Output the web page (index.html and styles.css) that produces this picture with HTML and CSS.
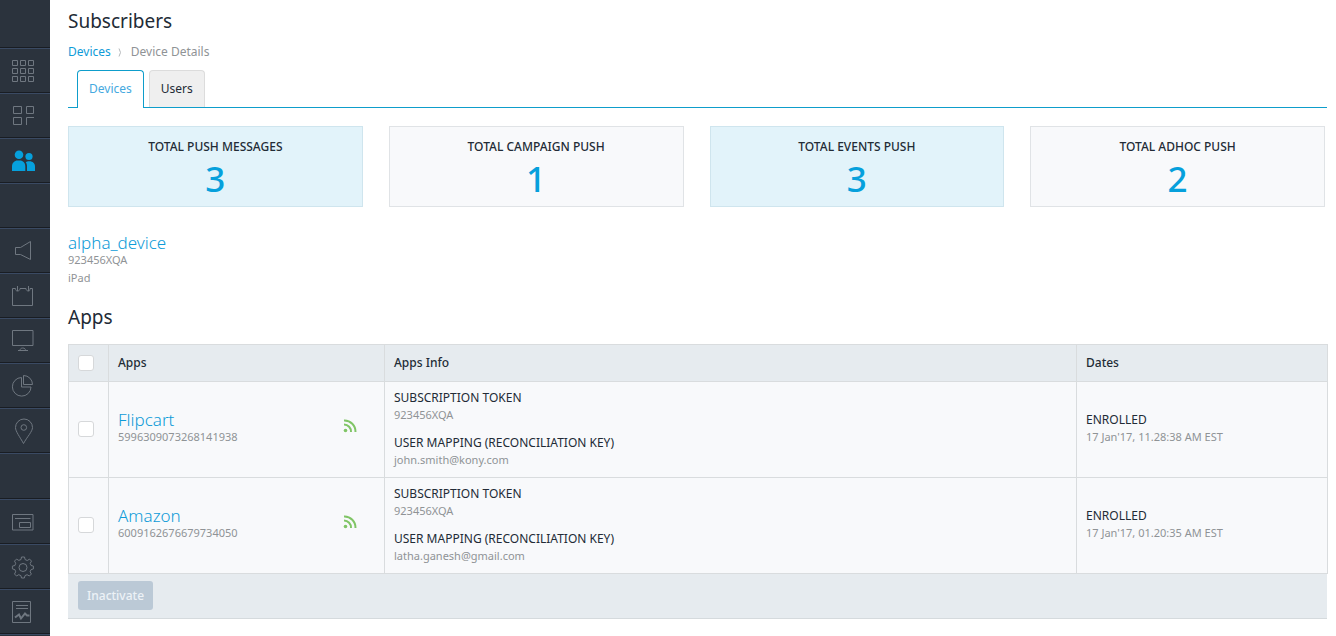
FILE: index.html
```html
<!DOCTYPE html>
<html lang="en">
<head>
<meta charset="utf-8">
<title>Subscribers</title>
<link rel="stylesheet" href="styles.css">
</head>
<body>
<div class="app">
  <nav class="sidebar" aria-label="Main">
    <div class="side-top"></div>
    <a class="side-item" href="#" aria-label="Dashboard"><svg width="24" height="24" viewBox="0 0 24 24"><path d="M1.500 1.500h5v5h-5zM9.500 1.500h5v5h-5zM17.500 1.500h5v5h-5zM1.500 9.500h5v5h-5zM9.500 9.500h5v5h-5zM17.500 9.500h5v5h-5zM1.500 17.500h5v5h-5zM9.500 17.500h5v5h-5zM17.500 17.500h5v5h-5z"/></svg></a>
    <a class="side-item" href="#" aria-label="Apps"><svg width="24" height="24" viewBox="0 0 24 24"><path d="M2.500 2.500h8v7h-8zM15.500 2.500h7v7h-7zM2.500 13.500h8v7h-8zM15.500 21v-7.500h7.500"/></svg></a>
    <a class="side-item active" href="#" aria-label="Subscribers"><svg width="24" height="24" viewBox="0 0 24 24"><circle cx="8" cy="5.700" r="4.300"/><circle cx="18" cy="7.500" r="3.600"/><path d="M1 22v-4.500c0-3.500 2.500-6 5.500-6h2.300c3.300 0 5.500 2.500 5.500 6v4.500zM16 22v-5c0-1.600-.5-2.800-1.200-3.800.8-.6 1.600-.9 2.600-.9h1.200c3 0 5.400 2.200 5.400 5.200v4.500z"/></svg></a>
    <div class="side-item"></div>
    <a class="side-item" href="#" aria-label="Campaigns"><svg width="24" height="24" viewBox="0 0 24 24"><path d="M4.500 8.500h5L19.500 2.500v18L9.500 15.500h-5z"/></svg></a>
    <a class="side-item" href="#" aria-label="Events"><svg width="24" height="24" viewBox="0 0 24 24"><path d="M6.500 2v5M17.500 2v5M4.500 4.500h-3v17h20v-17h-2.500M4.500 4.500c0 1.800.8 2.500 2 2.500s2.500-.7 2.500-2.500h6c0 1.800 1.300 2.500 2.500 2.500s1.500-.7 1.500-2.500"/></svg></a>
    <a class="side-item" href="#" aria-label="Messages"><svg width="24" height="24" viewBox="0 0 24 24"><path d="M1.500 1.500h20.500v15h-20.500zM7 21.500h10M9 21.500c0-1.500 1-2.500 2.800-2.500s2.700 1 2.700 2.500"/></svg></a>
    <a class="side-item" href="#" aria-label="Reports"><svg width="24" height="24" viewBox="0 0 24 24"><path d="M10.500 3.500a9.300 9.300 0 1 0 9.500 9.500h-9.500zM12.500 1.500v9h9a9 9 0 0 0-9-9z"/></svg></a>
    <a class="side-item" href="#" aria-label="Locations"><svg width="24" height="26" viewBox="0 0 24 26"><path d="M12.500 25.500C9 19 4.500 13.500 4.500 9.500a8 8 0 0 1 17 0c0 4-5.500 9.500-9 16z" /><circle cx="12.800" cy="9.500" r="2.800"/></svg></a>
    <div class="side-item spacer"></div>
    <a class="side-item" href="#" aria-label="Segments"><svg width="24" height="24" viewBox="0 0 24 24"><path d="M1.500 4.500h20.500v15.500h-20.500zM4 8.500h15.500M8.500 12.500h11v5h-11z"/></svg></a>
    <a class="side-item" href="#" aria-label="Settings"><svg width="24" height="24" viewBox="0 0 24 24"><path d="M10.500 2h3l.6 2.600 2.200.9 2.300-1.400 1.900 2-1.300 2.300.8 2.100 2.400.6v2.800l-2.400.7-.9 2.200 1.300 2.200-2 2-2.300-1.300-2.100.9-.6 2.400h-2.900l-.6-2.400-2.200-.9-2.200 1.300-2-2 1.200-2.200-.8-2.200-2.500-.7v-2.800l2.500-.6.8-2.200-1.200-2.200 2-2 2.300 1.300 2.200-.9z"/><circle cx="12" cy="12.500" r="4"/></svg></a>
    <a class="side-item" href="#" aria-label="Logs"><svg width="24" height="24" viewBox="0 0 24 24"><path d="M1.500 1.500h18v21h-18zM5 5.500h12M5 8.500h12"/><path class="trend" d="M4 17.500L8 14.500l2 4 4-5 2 2h2.500"/></svg></a>
    <div class="side-item"></div>
  </nav>

  <main class="content">
    <h1 class="heading">Subscribers</h1>
    <nav class="crumbs" aria-label="Breadcrumb">
      <a href="#">Devices</a>
      <svg width="5" height="9" viewBox="0 0 5 9" aria-hidden="true"><path d="M1 .5q3 4 0 8"/></svg>
      <span>Device Details</span>
    </nav>
    <div class="tabs" role="tablist">
      <button class="tab selected" role="tab" aria-selected="true">Devices</button>
      <button class="tab" role="tab" aria-selected="false">Users</button>
    </div>

    <section class="stats">
      <div class="stat tinted"><h2>TOTAL PUSH MESSAGES</h2><p>3</p></div>
      <div class="stat"><h2>TOTAL CAMPAIGN PUSH</h2><p>1</p></div>
      <div class="stat tinted"><h2>TOTAL EVENTS PUSH</h2><p>3</p></div>
      <div class="stat"><h2>TOTAL ADHOC PUSH</h2><p>2</p></div>
    </section>

    <section class="device">
      <a class="name" href="#">alpha_device</a>
      <p class="meta">923456XQA</p>
      <p class="meta">iPad</p>
    </section>

    <h2 class="heading">Apps</h2>
    <table class="apps">
      <colgroup><col class="col-check"><col class="col-app"><col><col class="col-date"></colgroup>
      <thead>
        <tr><th><input type="checkbox" aria-label="Select all apps"></th><th>Apps</th><th>Apps Info</th><th>Dates</th></tr>
      </thead>
      <tbody>
        <tr>
          <td class="pick"><input type="checkbox" aria-label="Select Flipcart"></td>
          <td><div class="app-cell"><div><a class="name" href="#">Flipcart</a><p class="meta">5996309073268141938</p></div>
            <svg class="feed" width="14" height="14" viewBox="0 0 14 14" aria-hidden="true"><circle cx="2.500" cy="11.500" r="1.800"/><path d="M1 5.500a7 7 0 0 1 7 7.500M1 1.500a11 11 0 0 1 11.500 11.500"/></svg></div></td>
          <td class="info"><p class="label">SUBSCRIPTION TOKEN</p><p class="meta spaced">923456XQA</p><p class="label">USER MAPPING (RECONCILIATION KEY)</p><p class="meta">john.smith@kony.com</p></td>
          <td><p class="label">ENROLLED</p><p class="meta">17 Jan'17, 11.28:38 AM EST</p></td>
        </tr>
        <tr>
          <td class="pick"><input type="checkbox" aria-label="Select Amazon"></td>
          <td><div class="app-cell"><div><a class="name" href="#">Amazon</a><p class="meta">6009162676679734050</p></div>
            <svg class="feed" width="14" height="14" viewBox="0 0 14 14" aria-hidden="true"><circle cx="2.500" cy="11.500" r="1.800"/><path d="M1 5.500a7 7 0 0 1 7 7.500M1 1.500a11 11 0 0 1 11.500 11.500"/></svg></div></td>
          <td class="info"><p class="label">SUBSCRIPTION TOKEN</p><p class="meta spaced">923456XQA</p><p class="label">USER MAPPING (RECONCILIATION KEY)</p><p class="meta">latha.ganesh@gmail.com</p></td>
          <td><p class="label">ENROLLED</p><p class="meta">17 Jan'17, 01.20:35 AM EST</p></td>
        </tr>
      </tbody>
    </table>
    <div class="table-footer"><button class="inactivate" disabled>Inactivate</button></div>
  </main>
</div>
</body>
</html>
```
FILE: styles.css
```css
* { box-sizing: border-box; }
body {
  margin: 0;
  background: #fff;
  color: #222b36;
  font-family: "Noto Sans", "Open Sans", sans-serif;
  font-size: 12px;
  line-height: 18px;
}
h1, h2, p { margin: 0; }
a { color: #0e9bd8; text-decoration: none; }
button { font: inherit; }

.app { display: flex; height: 100vh; }
.sidebar { flex: none; width: 50px; overflow: hidden; background: #2b333d; }
.side-top { height: 47px; }
.side-item {
  display: flex;
  align-items: center;
  height: 45px;
  padding: 1px 0 0 11px;
  border-top: 1px solid #191d23;
  box-shadow: inset 0 1px #3a4a63;
}
.side-item.spacer { height: 46px; }
.side-item svg { fill: none; stroke: #6f7780; stroke-width: 1; }
.side-item.active svg { fill: #06a0dc; stroke: none; }
.side-item .trend { stroke-width: 2; }

.content { flex: 1; min-width: 0; padding: 8px 8px 0 18px; }
.heading { font-size: 19px; line-height: 26px; font-weight: 400; }

.crumbs { display: flex; align-items: center; margin-top: 9px; color: #8f9396; }
.crumbs svg { margin: 0 8px 0 7px; fill: none; stroke: #b4b8bb; }

.tabs { display: flex; gap: 5px; margin-top: 9px; padding-left: 9px; margin-right: 1px; border-bottom: 1px solid #0e9dcb; }
.tab {
  height: 37px;
  padding: 0 11px;
  border: 1px solid #dcdcdc;
  border-bottom: 0;
  border-radius: 4px 4px 0 0;
  background: #efefef;
  color: #222b36;
}
.tab.selected { height: 38px; margin-bottom: -1px; padding-bottom: 1px; border-color: #0e9dcb; background: #fff; color: #45a9e0; }

.stats { display: grid; grid-template-columns: repeat(4, 1fr); gap: 26px; margin: 18px 3px 0 0; }
.stat { height: 81px; padding-top: 11px; border: 1px solid #e0e3e6; background: #f8f9fb; text-align: center; }
.stat.tinted { border-color: #cfe5ee; background: #e2f3fa; }
.stat h2 { font-size: 12px; font-weight: 500; }
.stat p { color: #06a0dc; font-size: 35px; line-height: 46px; font-weight: 500; }

.device { margin: 27px 0 18px; }
.name { display: block; font-size: 17px; line-height: 18px; font-weight: 300; }
.meta { color: #8f9396; font-size: 11px; line-height: 16px; }
.device .meta + .meta { margin-top: 2px; }

.apps { width: 100%; margin-top: 14px; border-collapse: collapse; table-layout: fixed; }
.col-check { width: 40px; }
.col-app { width: 276px; }
.col-date { width: 251px; }
.apps th, .apps td { padding: 0 9px; border: 1px solid #d9dcde; text-align: left; }
.apps th { height: 37px; background: #e6ebef; font-weight: 500; }
.apps td { height: 96px; padding-bottom: 4px; background: #f8f9fb; }
.apps .pick, .apps .info { padding-bottom: 2px; }
.apps input {
  display: block;
  width: 16px;
  height: 16px;
  margin: 0;
  border: 1px solid #d6d8da;
  border-radius: 3px;
  background: #fff;
  appearance: none;
}
.app-cell { display: flex; align-items: center; justify-content: space-between; padding-right: 18px; }
.feed { margin-bottom: 3px; fill: #80c566; }
.feed path { fill: none; stroke: #80c566; stroke-width: 2; }
.spaced { margin-bottom: 11px; }

.table-footer { margin-right: 1px; padding: 7px 10px 8px; border-bottom: 1px solid #d5dadd; background: #e6ebef; }
.inactivate { display: block; height: 29px; padding: 0 9px; border: 0; border-radius: 3px; background: #bbc9d6; color: #edf2f6; font-weight: 500; }
```
